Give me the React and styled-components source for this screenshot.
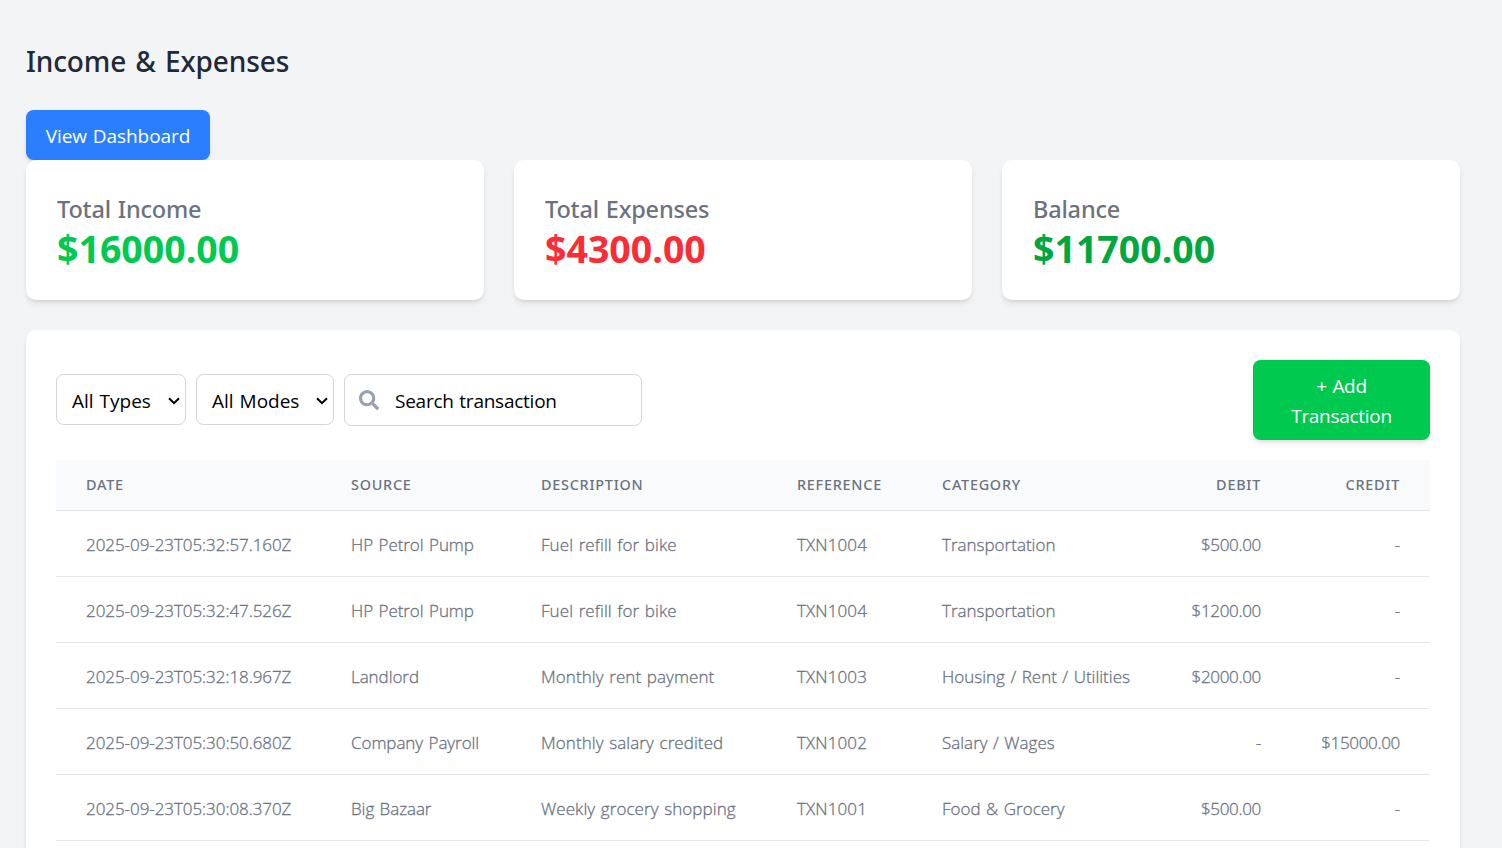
import React from 'react';
import styled, { createGlobalStyle } from 'styled-components';
import { FaSearch } from 'react-icons/fa';

const GlobalStyle = createGlobalStyle`
  *, *::before, *::after { box-sizing: border-box; }
  body {
    margin: 0;
    background: #f3f4f6;
    font-family: 'Segoe UI', 'Open Sans', 'Noto Sans', sans-serif;
    color: #000;
  }
  h1, h2, p { margin: 0; }
`;

const shadow = '0 4px 6px -1px rgba(0, 0, 0, 0.1), 0 2px 4px -2px rgba(0, 0, 0, 0.1)';

const Page = styled.main`
  height: 848px;
  overflow: hidden;
  padding: 41px 42px 0 26px;
`;

const Title = styled.h1`
  font-family: 'Segoe UI', 'Noto Sans', sans-serif;
  font-size: 28px;
  line-height: 40px;
  font-weight: 500;
  letter-spacing: -0.12px;
  word-spacing: 2px;
  color: #1e2939;
  margin-bottom: 29px;
`;

const Button = styled.button`
  display: block;
  border: 0;
  font-family: inherit;
  font-size: 19px;
  line-height: 30px;
  letter-spacing: ${(p) => p.$tracking || 'normal'};
  word-spacing: 1px;
  color: #fff;
  border-radius: 7.5px;
  box-shadow: ${shadow};
  background: ${(p) => (p.$tone === 'green' ? '#00c950' : '#2b7fff')};
  width: ${(p) => p.$width};
  padding: ${(p) => p.$padding};
`;

const Cards = styled.section`
  display: grid;
  grid-template-columns: repeat(3, 1fr);
  gap: 30px;
  margin-bottom: 30px;
`;

const Card = styled.article`
  position: relative;
  height: 140px;
  padding: 30px 31px;
  background: #fff;
  border-radius: 10px;
  box-shadow: ${shadow};
`;

const CardLabel = styled.h2`
  font-family: 'Segoe UI', 'Noto Sans', sans-serif;
  font-size: 23.5px;
  line-height: 38px;
  font-weight: 500;
  letter-spacing: -0.18px;
  word-spacing: 1px;
  color: #6a7282;
`;

const CardValue = styled.p`
  font-size: 37.5px;
  line-height: 41px;
  font-weight: 700;
  color: ${(p) => p.$color};
`;

const Panel = styled.section`
  background: #fff;
  border-radius: 10px;
  box-shadow: ${shadow};
  padding: 30px;
`;

const Toolbar = styled.div`
  display: flex;
  align-items: center;
  justify-content: space-between;
  margin-bottom: 20px;
`;

const Filters = styled.div`
  display: flex;
  align-items: flex-start;
  gap: 10px;
`;

const Control = styled.div`
  display: flex;
  align-items: center;
  width: ${(p) => p.$width}px;
  height: ${(p) => p.$height}px;
  padding: ${(p) => p.$padding};
  border: 1px solid #d1d5dc;
  border-radius: 7.5px;
  background: #fff;
  font-size: 19px;
  line-height: 30px;
  letter-spacing: ${(p) => (p.$spread ? '0' : '-0.25px')};
  word-spacing: 1px;
  white-space: nowrap;
  justify-content: ${(p) => (p.$spread ? 'space-between' : 'flex-start')};
`;

const Placeholder = styled.span`
  padding-top: 2px;
`;

const SearchIcon = styled(FaSearch)`
  width: 20px;
  height: 20px;
  margin-right: 16px;
  color: #99a1af;
`;

const Table = styled.table`
  width: 100%;
  table-layout: fixed;
  border-collapse: separate;
  border-spacing: 0;
`;

const Col = styled.col`
  width: ${(p) => p.$width}px;
`;

const HeadCell = styled.th`
  height: 51px;
  padding: 0 30px;
  background: #f9fafb;
  border-bottom: 1px solid #e5e7eb;
  text-align: ${(p) => (p.$end ? 'right' : 'left')};
  font-family: 'Segoe UI', 'Noto Sans', sans-serif;
  font-size: 14.4px;
  line-height: 20px;
  font-weight: 500;
  letter-spacing: 0.75px;
  text-transform: uppercase;
  color: #6a7282;
`;

const Cell = styled.td`
  height: 66px;
  padding: 2px 30px 0 ${(p) => (p.$end ? '10px' : '30px')};
  border-bottom: 1px solid #e5e7eb;
  text-align: ${(p) => (p.$end ? 'right' : 'left')};
  font-size: 17px;
  font-weight: 300;
  line-height: 25px;
  letter-spacing: ${(p) => p.$tracking}px;
  word-spacing: 1.1px;
  -webkit-text-stroke: 0.3px #6a7282;
  color: #6a7282;
  white-space: nowrap;
`;

const Chevron = () => (
  <svg width="12" height="8" viewBox="0 0 12 8" fill="none" stroke="#000" strokeWidth="2">
    <path d="M1 1.2 6 6.2 11 1.2" />
  </svg>
);

const columns = [
  { name: 'Date', width: 265, tracking: -0.06 },
  { name: 'Source', width: 190, tracking: -0.06 },
  { name: 'Description', width: 256, tracking: 0.08 },
  { name: 'Reference', width: 145, tracking: 0.12 },
  { name: 'Category', width: 250, tracking: 0 },
  { name: 'Debit', width: 129, end: true, tracking: -0.32 },
  { name: 'Credit', width: 139, end: true, tracking: -0.32 },
];

const rows = [
  ['2025-09-23T05:32:57.160Z', 'HP Petrol Pump', 'Fuel refill for bike', 'TXN1004', 'Transportation', '$500.00', '-'],
  ['2025-09-23T05:32:47.526Z', 'HP Petrol Pump', 'Fuel refill for bike', 'TXN1004', 'Transportation', '$1200.00', '-'],
  ['2025-09-23T05:32:18.967Z', 'Landlord', 'Monthly rent payment', 'TXN1003', 'Housing / Rent / Utilities', '$2000.00', '-'],
  ['2025-09-23T05:30:50.680Z', 'Company Payroll', 'Monthly salary credited', 'TXN1002', 'Salary / Wages', '-', '$15000.00'],
  ['2025-09-23T05:30:08.370Z', 'Big Bazaar', 'Weekly grocery shopping', 'TXN1001', 'Food & Grocery', '$500.00', '-'],
];

const totals = [
  { label: 'Total Income', value: '$16000.00', color: '#00c950' },
  { label: 'Total Expenses', value: '$4300.00', color: '#fb2c36' },
  { label: 'Balance', value: '$11700.00', color: '#00a63e' },
];

export default function App() {
  return (
    <Page>
      <GlobalStyle />
      <Title>Income &amp; Expenses</Title>
      <Button $width="184px" $padding="11px 0 9px" $tracking="-0.06px">View Dashboard</Button>
      <Cards>
        {totals.map((t) => (
          <Card key={t.label}>
            <CardLabel>{t.label}</CardLabel>
            <CardValue $color={t.color}>{t.value}</CardValue>
          </Card>
        ))}
      </Cards>
      <Panel>
        <Toolbar>
          <Filters>
            <Control $width={130} $height={51} $padding="3px 5px 0 15px" $spread>All Types<Chevron /></Control>
            <Control $width={138} $height={51} $padding="3px 5px 0 15px" $spread>All Modes<Chevron /></Control>
            <Control $width={298} $height={52} $padding="0 14px"><SearchIcon /><Placeholder>Search transaction</Placeholder></Control>
          </Filters>
          <Button $tone="green" $width="177px" $padding="11px 30px 9px" $tracking="-0.3px">+ Add Transaction</Button>
        </Toolbar>
        <Table>
          <colgroup>
            {columns.map((c) => <Col key={c.name} $width={c.width} />)}
          </colgroup>
          <thead>
            <tr>
              {columns.map((c) => <HeadCell key={c.name} $end={c.end}>{c.name}</HeadCell>)}
            </tr>
          </thead>
          <tbody>
            {rows.map((r) => (
              <tr key={r[0]}>
                {r.map((v, i) => (
                  <Cell key={columns[i].name} $end={columns[i].end} $tracking={columns[i].tracking}>{v}</Cell>
                ))}
              </tr>
            ))}
          </tbody>
        </Table>
      </Panel>
    </Page>
  );
}
